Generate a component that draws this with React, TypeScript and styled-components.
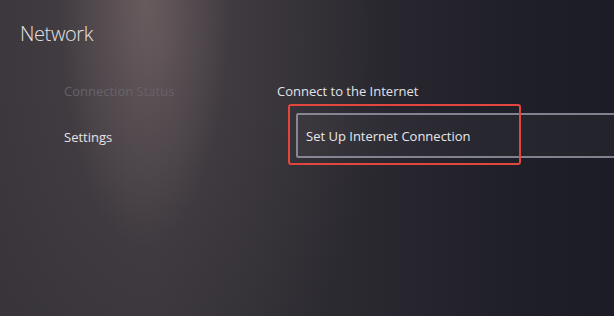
import React from "react";
import styled, { createGlobalStyle } from "styled-components";

const Global = createGlobalStyle`
  html, body { margin: 0; padding: 0; background: #1e1e27; }
  body { font-family: "Open Sans", "Noto Sans", sans-serif; }
`;

const Screen = styled.div`
  position: relative;
  width: 614px;
  height: 316px;
  overflow: hidden;
  background:
    radial-gradient(ellipse 85px 250px at 145px 0px, rgba(150, 128, 128, 0.42), rgba(150, 128, 128, 0) 100%),
    radial-gradient(ellipse 220px 380px at 165px 40px, rgba(110, 95, 98, 0.33), rgba(110, 95, 98, 0) 100%),
    linear-gradient(90deg, #38343a 0%, #37343a 25%, #2c2a31 55%, #1f1f29 85%, #1c1c26 100%);
  color: #e6e6e8;
`;

const Header = styled.header`
  padding: 21px 0 0 20px;
`;

const Title = styled.h1`
  margin: 0;
  font-size: 20px;
  line-height: 26px;
  font-weight: 300;
  color: #e4e2e4;
  letter-spacing: -0.4px;
`;

const Main = styled.div`
  display: grid;
  grid-template-columns: 213px 1fr;
  padding-left: 64px;
  margin-top: 34px;
`;

const Nav = styled.nav`
  display: flex;
  flex-direction: column;
  gap: 26px;
`;

const NavItem = styled.div<{ $dim?: boolean }>`
  font-size: 13px;
  line-height: 20px;
  color: ${(p) => (p.$dim ? "#67626a" : "#e6e4e6")};
`;

const Content = styled.section`
  display: flex;
  flex-direction: column;
`;

const SectionLabel = styled.div`
  font-size: 13px;
  line-height: 20px;
  color: #e2e2e6;
`;

const OptionButton = styled.div`
  position: relative;
  margin: 12px -30px 0 19px;
  height: 41px;
  display: flex;
  align-items: center;
  padding-left: 8px;
  border: 2px solid rgba(165, 165, 182, 0.72);
  border-right: none;
  border-radius: 2px 0 0 2px;
  background: rgba(255, 255, 255, 0.03);
  font-size: 13px;
  color: #e8e8ea;
`;

const Highlight = styled.div`
  position: absolute;
  left: -10px;
  top: -11px;
  width: 233px;
  height: 61px;
  box-sizing: border-box;
  border: 2.5px solid #e2463d;
  border-radius: 3px;
  pointer-events: none;
`;

export default function App() {
  return (
    <>
      <Global />
      <Screen>
        <Header>
          <Title>Network</Title>
        </Header>
        <Main>
          <Nav>
            <NavItem $dim>Connection Status</NavItem>
            <NavItem>Settings</NavItem>
          </Nav>
          <Content>
            <SectionLabel>Connect to the Internet</SectionLabel>
            <OptionButton>
              Set Up Internet Connection
              <Highlight />
            </OptionButton>
          </Content>
        </Main>
      </Screen>
    </>
  );
}
